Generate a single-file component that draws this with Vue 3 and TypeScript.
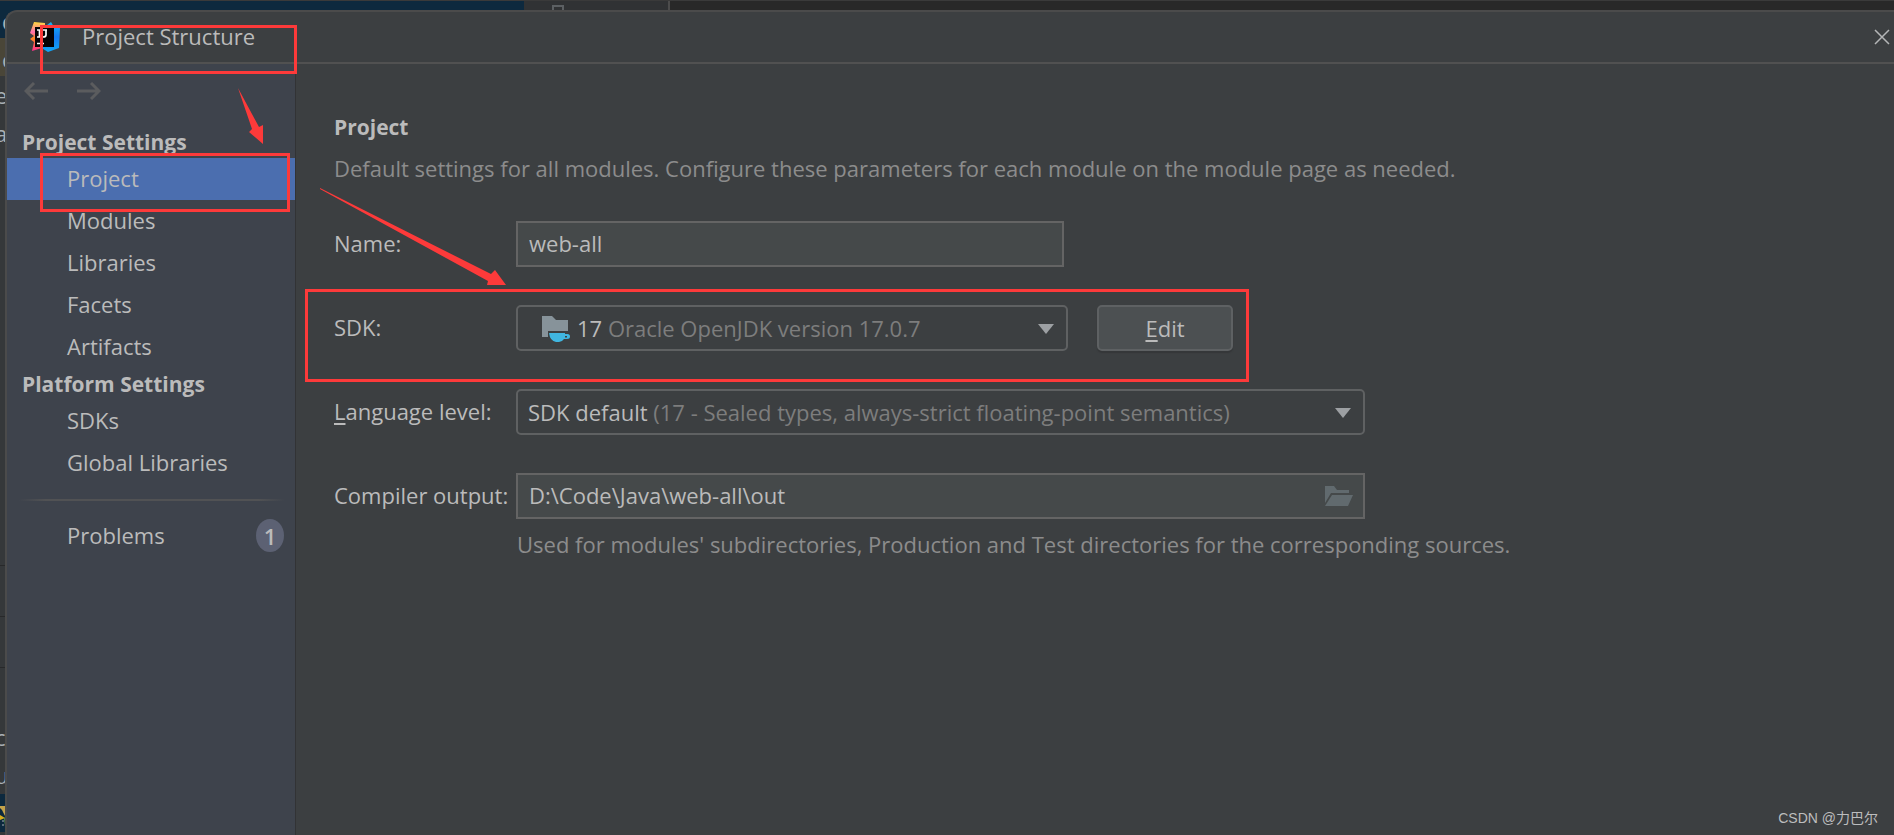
<script setup lang="ts">
import { ref } from 'vue'

interface NavGroup {
  title: string
  items: string[]
}

const groups: NavGroup[] = [
  { title: 'Project Settings', items: ['Project', 'Modules', 'Libraries', 'Facets', 'Artifacts'] },
  { title: 'Platform Settings', items: ['SDKs', 'Global Libraries'] },
]

const active = ref('Project')
const projectName = ref('web-all')
const outputPath = ref('D:\\Code\\Java\\web-all\\out')
const sdk = ref('17')
const level = ref('default')
</script>

<template>
  <div class="desktop">
    <div class="editor-top" aria-hidden="true">
      <span class="top-selected"></span>
      <span class="top-tab"><i class="top-glyph"></i></span>
      <span class="top-rest"></span>
    </div>
    <div class="editor-side" aria-hidden="true">
      <span class="side-cell blue">d</span>
      <span class="side-cell olive">c</span>
      <span class="side-cell">e</span>
      <span class="side-cell">a</span>
      <span class="side-fill"></span>
      <span class="side-line"></span>
      <span class="side-line"></span>
      <span class="side-line"></span>
      <span class="side-cell">c</span>
      <span class="side-cell">u</span>
      <span class="side-cell flag">
        <svg viewBox="0 0 8 38">
          <path d="M0 12h8v6L5 22 2 16 0 14Z" fill="#c3a24a" />
          <path d="M0 21 5 24 0 26Z" fill="#d8ac1c" />
          <path d="M4 24 8 21V32H5Z" fill="#5d9a48" />
          <path d="M2 27h2M2 31h2" stroke="#a9b0b4" />
        </svg>
      </span>
    </div>

    <section class="dialog" aria-label="Project Structure">
      <header class="titlebar">
        <svg class="logo" viewBox="0 0 30 30" aria-hidden="true">
          <defs>
            <linearGradient id="warm" x1="0" y1="0" x2="0" y2="1">
              <stop offset="0" stop-color="#ffd83d" />
              <stop offset="0.35" stop-color="#ff6fb0" />
              <stop offset="0.55" stop-color="#ff8a1f" />
              <stop offset="1" stop-color="#fe2d8e" />
            </linearGradient>
            <linearGradient id="cool" x1="0" y1="0" x2="0" y2="1">
              <stop offset="0" stop-color="#12b5f5" />
              <stop offset="0.5" stop-color="#1478f0" />
              <stop offset="1" stop-color="#10a8f6" />
            </linearGradient>
          </defs>
          <path d="M4 0 15 1 15 25 2 29 4 20 0 17 4 14 0 11Z" fill="url(#warm)" />
          <path d="M17 3 21 0 24 5 30 6 29 26 18 30 10 25 20 20Z" fill="url(#cool)" />
          <rect x="5" y="5" width="19" height="20" fill="#050305" />
          <path
            d="M7 8h5M9.500 8v7M7 15h5M13 8h4M16 8v5q0 2-3 2M7 21.500h7"
            fill="none"
            stroke="#fff"
            stroke-width="1.700"
          />
        </svg>
        <h1 class="title">Project Structure</h1>
        <button class="close" type="button" aria-label="Close">
          <svg viewBox="0 0 16 16"><path d="M1 1 15 15M15 1 1 15" /></svg>
        </button>
      </header>

      <div class="body">
        <nav class="sidebar" aria-label="Settings">
          <div class="history">
            <button type="button" aria-label="Back">
              <svg viewBox="0 0 24 18"><path d="M24 9H2M10 1 2 9l8 8" /></svg>
            </button>
            <button type="button" aria-label="Forward">
              <svg viewBox="0 0 24 18"><path d="M0 9h22M14 1l8 8-8 8" /></svg>
            </button>
          </div>
          <template v-for="group in groups" :key="group.title">
            <h2 class="group">{{ group.title }}</h2>
            <button
              v-for="item in group.items"
              :key="item"
              type="button"
              class="item"
              :class="{ active: item === active }"
              @click="active = item"
            >
              {{ item }}
            </button>
          </template>
          <hr class="divider" />
          <button type="button" class="item problems">
            <span>Problems</span>
            <span class="badge">1</span>
          </button>
        </nav>

        <main class="content">
          <h2 class="heading">Project</h2>
          <p class="intro">
            Default settings for all modules. Configure these parameters for each module on the module page as needed.
          </p>

          <form class="form" @submit.prevent>
            <label for="name">Name:</label>
            <input id="name" v-model="projectName" class="field name" type="text" />

            <label for="sdk">SDK:</label>
            <div class="sdk-row">
              <div class="combo">
                <select id="sdk" v-model="sdk">
                  <option value="17">17 Oracle OpenJDK version 17.0.7</option>
                </select>
                <span class="face sdk-face" aria-hidden="true">
                  <svg class="sdk-icon" viewBox="0 0 28 27">
                    <path d="M0 1h10l4 4h12v11H6v6H0Z" fill="#87939a" />
                    <path
                      d="M7 18h16v1h2.500q2.500 0 2.500 2.500T25 24h-3q-2 3-5 3h-3q-6-1-7-9Zm16 3v1.500h2V21Z"
                      fill="#40b6e0"
                      fill-rule="evenodd"
                    />
                  </svg>
                  <span>17 <em>Oracle OpenJDK version 17.0.7</em></span>
                </span>
                <svg class="arrow" viewBox="0 0 16 10" aria-hidden="true"><path d="M0 0h16L8 10Z" /></svg>
              </div>
              <button class="edit" type="button"><u>E</u>dit</button>
            </div>

            <label for="level"><u>L</u>anguage level:</label>
            <div class="combo">
              <select id="level" v-model="level">
                <option value="default">
                  SDK default (17 - Sealed types, always-strict floating-point semantics)
                </option>
              </select>
              <span class="face" aria-hidden="true">
                <span>SDK default <em>(17 - Sealed types, always-strict floating-point semantics)</em></span>
              </span>
              <svg class="arrow" viewBox="0 0 16 10" aria-hidden="true"><path d="M0 0h16L8 10Z" /></svg>
            </div>

            <label for="output">Compiler output:</label>
            <div class="field path">
              <input id="output" v-model="outputPath" type="text" />
              <button type="button" aria-label="Browse">
                <svg viewBox="0 0 28 20">
                  <path d="M0 0h9l3 4h12v3H6L0 17Z" />
                  <path d="M7 9h21l-5 11H0Z" />
                </svg>
              </button>
            </div>
          </form>
          <p class="hint">
            Used for modules' subdirectories, Production and Test directories for the corresponding sources.
          </p>
        </main>
      </div>
    </section>

    <svg class="marks" width="1260" height="400" aria-hidden="true">
      <g fill="none" stroke="#fd3a3a" stroke-width="3">
        <rect x="41.500" y="26.500" width="254" height="46" />
        <rect x="41.500" y="154.500" width="247" height="56" />
        <rect x="306.500" y="290.500" width="941" height="90" />
      </g>
      <g fill="#fd3a3a">
        <path d="M238 88 259 127 263 125V144L249 132 252 129Z" />
        <path d="M320 188 491 274 495 270 506 285H487L488 281 320 189Z" />
      </g>
    </svg>
    <span class="watermark">CSDN @力巴尔</span>
  </div>
</template>

<style>
body {
  margin: 0;
  background: #3c3f41;
}
</style>

<style scoped>
.desktop {
  position: relative;
  display: grid;
  grid-template: 10px 1fr / 5px minmax(0, 1fr);
  min-height: 100vh;
  overflow: hidden;
  background: #35383a;
  color: #bbbbbb;
  font: 22px/30px 'Open Sans', 'Noto Sans', 'Noto Sans CJK SC', sans-serif;
}

.desktop * {
  box-sizing: border-box;
}

h1,
h2,
p {
  margin: 0;
}

button,
input,
select {
  margin: 0;
  padding: 0;
  border: 0;
  background: none;
  color: inherit;
  font: inherit;
}

.editor-top {
  grid-column: 1 / -1;
  grid-row: 1;
  display: flex;
  border-top: 1px solid #3a3a3a;
}

.top-selected {
  width: 524px;
  background: #0d293e;
}

.top-tab {
  width: 146px;
  padding: 4px 0 0 28px;
  border-right: 2px solid #4c4c4c;
  background: #303234;
}

.top-glyph {
  display: block;
  width: 12px;
  height: 5px;
  border: 2px solid #5c6063;
  border-bottom: 0;
}

.top-rest {
  flex: 1;
  background: #282828;
}

.editor-side {
  grid-area: 2 / 1;
  display: flex;
  flex-direction: column;
  width: 20px;
  padding-bottom: 3px;
  overflow: hidden;
  color: #a9b0b4;
}

.side-cell {
  flex: none;
  height: 38px;
  line-height: 38px;
  text-indent: -5px;
}

.side-cell.blue {
  height: 28px;
  line-height: 22px;
  text-indent: 2px;
  background: #0d293e;
}

.side-cell.olive {
  text-indent: 2px;
  line-height: 42px;
  background: #4a4638;
}

.side-cell.flag {
  background: #0d293e;
}

.side-cell.flag svg {
  display: block;
  width: 8px;
  height: 38px;
}

.side-fill {
  flex: 1;
}

.side-line {
  height: 51px;
  border-top: 1px solid #28292a;
}

.dialog {
  grid-area: 2 / 2;
  z-index: 1;
  display: flex;
  flex-direction: column;
  border: 2px solid #4b4b4b;
  border-width: 2px 0 0 2px;
  border-top-left-radius: 12px;
  background: #3c3f41;
}

.titlebar {
  display: flex;
  flex: none;
  align-items: center;
  height: 52px;
  padding: 0 4px 0 23px;
  border-bottom: 2px solid #515151;
}

.logo {
  width: 30px;
  height: 30px;
}

.title {
  flex: 1;
  margin-left: 22px;
  padding-bottom: 2px;
  font-size: 22px;
  font-weight: 400;
}

.close {
  width: 16px;
  height: 16px;
}

.close svg {
  display: block;
  width: 16px;
  height: 16px;
  fill: none;
  stroke: #b4b6b7;
  stroke-width: 1.500;
}

.body {
  display: flex;
  flex: 1;
}

.sidebar {
  flex: none;
  width: 289px;
  border-right: 1px solid #323335;
  background: #3e434c;
}

.history {
  display: flex;
  gap: 29px;
  height: 62px;
  padding: 18px 0 0 17px;
}

.history button {
  width: 24px;
  height: 18px;
}

.history svg {
  display: block;
  width: 24px;
  height: 18px;
  fill: none;
  stroke: #5b5c5e;
  stroke-width: 3;
}

.group {
  height: 32px;
  padding-left: 15px;
  font-size: 21px;
  font-weight: 700;
  line-height: 32px;
}

.item {
  display: block;
  width: 100%;
  height: 42px;
  padding: 0 0 2px 60px;
  text-align: left;
}

.item.active {
  background: #4b6eaf;
}

.divider {
  height: 2px;
  margin: 15px 10px 14px 12px;
  border: 0;
  background: linear-gradient(90deg, transparent, #515254 10%, #515254 90%, transparent);
}

.problems {
  display: flex;
  align-items: center;
  justify-content: space-between;
  padding-right: 11px;
}

.badge {
  width: 28px;
  height: 33px;
  border-radius: 50%;
  background: #5c6173;
  font-weight: 600;
  line-height: 34px;
  text-align: center;
}

.content {
  flex: 1;
  min-width: 0;
  padding: 47px 24px 24px 38px;
}

.heading {
  font-size: 21px;
  font-weight: 700;
  line-height: 32px;
}

.intro {
  margin-top: 10px;
  color: #8c8c8c;
}

.form {
  display: grid;
  grid-template-columns: 182px minmax(0, 849px);
  grid-auto-rows: 46px;
  row-gap: 38px;
  align-items: center;
  margin-top: 38px;
}

.form label {
  padding-bottom: 2px;
  white-space: nowrap;
}

.field {
  height: 46px;
  border: 2px solid #646464;
  background: #45494a;
}

.name {
  width: 100%;
  max-width: 548px;
  padding: 0 11px 2px;
}

.sdk-row {
  display: flex;
  gap: 29px;
}

.sdk-row .combo {
  flex: 0 1 552px;
}

.combo {
  display: grid;
  grid-template-columns: minmax(0, 1fr) 28px;
  align-items: center;
  height: 46px;
  border: 2px solid #5f6162;
  border-radius: 5px;
}

.combo select {
  grid-area: 1 / 1 / 2 / 3;
  width: 100%;
  height: 42px;
  appearance: none;
  color: transparent;
}

.face {
  grid-area: 1 / 1;
  display: flex;
  align-items: center;
  gap: 7px;
  padding-left: 10px;
  overflow: hidden;
  white-space: nowrap;
  pointer-events: none;
}

.sdk-face {
  padding-left: 24px;
}

.face em {
  color: #7d7d7d;
  font-style: normal;
}

.sdk-icon {
  flex: none;
  width: 28px;
  height: 27px;
}

.arrow {
  grid-area: 1 / 2;
  width: 16px;
  height: 10px;
  margin-top: 2px;
  fill: #9da0a3;
  pointer-events: none;
}

.edit {
  flex: 0 0 136px;
  height: 46px;
  border: 2px solid #5e6163;
  border-radius: 5px;
  background: #4c5052;
  box-shadow: 0 2px 1px #353739;
}

u {
  text-decoration-thickness: 2px;
  text-underline-offset: 3px;
}

.path {
  display: flex;
  align-items: center;
  padding: 0 10px 0 11px;
}

.path input {
  flex: 1;
  min-width: 0;
  padding-bottom: 2px;
}

.path button {
  width: 28px;
  height: 20px;
}

.path svg {
  display: block;
  width: 28px;
  height: 20px;
  fill: #616a6e;
}

.hint {
  margin: 10px 0 0 183px;
  color: #8c8c8c;
}

.marks {
  position: absolute;
  top: 0;
  left: 0;
  z-index: 2;
  pointer-events: none;
}

.watermark {
  position: absolute;
  right: 16px;
  bottom: 7px;
  z-index: 2;
  color: #bcbdbe;
  font: 14px/20px 'Liberation Sans', 'Noto Sans CJK SC', sans-serif;
}
</style>
